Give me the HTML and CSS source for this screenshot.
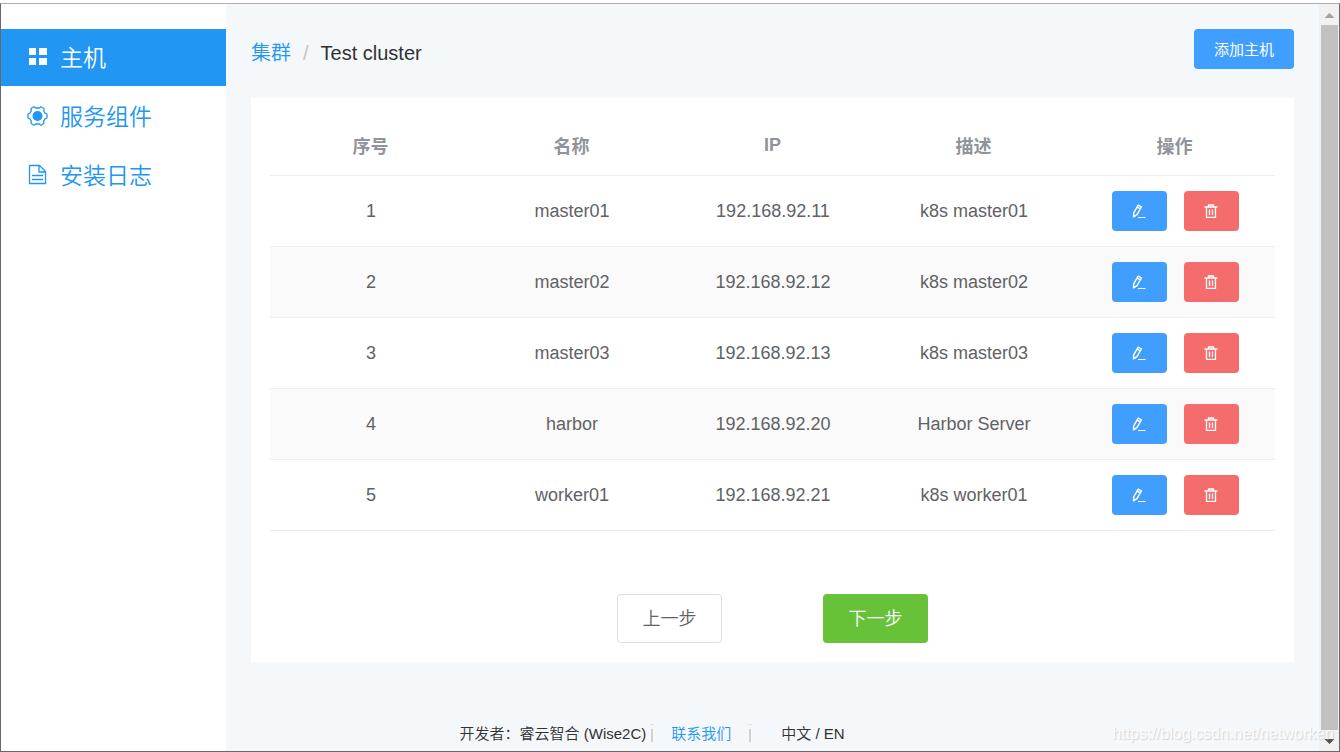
FILE: index.html
```html
<!DOCTYPE html>
<html lang="zh-CN">
<head>
<meta charset="utf-8">
<title>Test cluster</title>
<link rel="stylesheet" href="styles.css">
</head>
<body>
<svg class="sprite" aria-hidden="true">
  <symbol id="edit" viewBox="0 0 14 14">
    <path d="M6.2 1.2 9.4 2.9 5 10.600 1.500 12.800 1.700 8.800zM5.200 3.200 8.300 4.900" fill="none" stroke="currentColor" stroke-width="1.4" stroke-linejoin="round"/>
    <path d="M1.600 10 3.800 12 1.500 13z" fill="currentColor"/>
    <path d="M6 13.500h7.500" stroke="currentColor" stroke-width="1"/>
  </symbol>
  <symbol id="trash" viewBox="0 0 14 14">
    <path d="M.5 3h13M4.500 3V1h5v2M2.500 3v10.400h9V3M5.500 5.500v5.500M8.500 5.500v5.500" fill="none" stroke="currentColor" stroke-width="1.300"/>
  </symbol>
</svg>
<div class="window">
  <nav class="sidebar">
    <a class="nav-item active" href="#"><svg class="nav-icon" viewBox="0 0 22 22"><path d="M3 2h7v7H3zM13 2h8v7h-8zM3 12h7v7H3zM13 12h8v7h-8z" fill="currentColor"/></svg><span>主机</span></a>
    <a class="nav-item" href="#"><svg class="nav-icon" viewBox="0 0 22 22"><path d="M8 1.7 9.6 3h3.8L15 1.7 18 3.5 17.7 5.8 19 8.2 21 9v4l-2 .8-1.3 2.3.3 2.2-3 1.9L13.4 19H9.6L8 20.2 5 18.3l.3-2.2L4 13.8 2 13V9l2-.8 1.3-2.4L5 3.500z" fill="none" stroke="currentColor" stroke-width="1.3" stroke-linejoin="round"/><circle cx="11.5" cy="11" r="5" fill="currentColor"/></svg><span>服务组件</span></a>
    <a class="nav-item" href="#"><svg class="nav-icon" viewBox="0 0 22 22"><path d="M3.500 1.500h10l6 6v12h-16zM13 2v6h6M6 11.500h11M6 15.500h11" fill="none" stroke="currentColor" stroke-width="1.300"/></svg><span>安装日志</span></a>
  </nav>
  <main class="content">
    <header class="page-head">
      <div class="crumbs"><a href="#">集群</a><span class="slash">/</span><span>Test cluster</span></div>
      <button class="btn add" type="button">添加主机</button>
    </header>
    <section class="card">
      <table class="hosts">
        <thead><tr><th>序号</th><th>名称</th><th>IP</th><th>描述</th><th>操作</th></tr></thead>
        <tbody>
          <tr><td>1</td><td>master01</td><td>192.168.92.11</td><td>k8s master01</td><td><div class="actions"><button class="btn icon-btn edit" type="button" aria-label="编辑"><svg><use href="#edit"/></svg></button><button class="btn icon-btn delete" type="button" aria-label="删除"><svg><use href="#trash"/></svg></button></div></td></tr>
          <tr><td>2</td><td>master02</td><td>192.168.92.12</td><td>k8s master02</td><td><div class="actions"><button class="btn icon-btn edit" type="button" aria-label="编辑"><svg><use href="#edit"/></svg></button><button class="btn icon-btn delete" type="button" aria-label="删除"><svg><use href="#trash"/></svg></button></div></td></tr>
          <tr><td>3</td><td>master03</td><td>192.168.92.13</td><td>k8s master03</td><td><div class="actions"><button class="btn icon-btn edit" type="button" aria-label="编辑"><svg><use href="#edit"/></svg></button><button class="btn icon-btn delete" type="button" aria-label="删除"><svg><use href="#trash"/></svg></button></div></td></tr>
          <tr><td>4</td><td>harbor</td><td>192.168.92.20</td><td>Harbor Server</td><td><div class="actions"><button class="btn icon-btn edit" type="button" aria-label="编辑"><svg><use href="#edit"/></svg></button><button class="btn icon-btn delete" type="button" aria-label="删除"><svg><use href="#trash"/></svg></button></div></td></tr>
          <tr><td>5</td><td>worker01</td><td>192.168.92.21</td><td>k8s worker01</td><td><div class="actions"><button class="btn icon-btn edit" type="button" aria-label="编辑"><svg><use href="#edit"/></svg></button><button class="btn icon-btn delete" type="button" aria-label="删除"><svg><use href="#trash"/></svg></button></div></td></tr>
        </tbody>
      </table>
      <div class="steps">
        <button class="btn step prev" type="button">上一步</button>
        <button class="btn step next" type="button">下一步</button>
      </div>
    </section>
    <footer class="footer">
      <span>开发者：睿云智合 (Wise2C)</span><i class="divider"></i><a href="#">联系我们</a><i class="divider"></i><span class="lang">中文 / EN</span>
    </footer>
  </main>
  <div class="scrollbar" aria-hidden="true">
    <svg viewBox="0 0 20 21"><path d="M5.5 14 10.500 9l5 5z" fill="#a3a3a3"/></svg>
    <div class="thumb"></div>
    <svg viewBox="0 0 20 21"><path d="M5.500 9 10.500 14l5-5z" fill="#505050"/></svg>
  </div>
</div>
<div class="watermark">https://blog.csdn.net/networken</div>
</body>
</html>
```
FILE: styles.css
```css
* { box-sizing: border-box; }
body {
  margin: 0;
  padding-top: 3px;
  min-height: 100vh;
  display: flex;
  background: #fff;
  color: #303133;
  font-family: "Liberation Sans", "Noto Sans CJK SC", sans-serif;
  font-weight: 350;
}
a { color: #2196f3; text-decoration: none; }
.sprite { position: absolute; width: 0; height: 0; }
.window {
  flex: 1;
  display: flex;
  border: 1px solid #68686a;
  border-top-color: #b0b0b4;
}
.sidebar {
  flex: 0 0 225px;
  display: flex;
  flex-direction: column;
  gap: 2px;
  padding-top: 25px;
}
.nav-item {
  display: flex;
  align-items: center;
  gap: 12px;
  height: 57px;
  padding: 0 0 1px 25px;
  font-size: 23px;
}
.nav-item span { padding-bottom: 3px; }
.nav-item.active { background: #2196f3; color: #fff; }
.nav-icon { width: 22px; height: 22px; }
.content {
  flex: 1;
  display: flex;
  flex-direction: column;
  padding: 25px 25px 0;
  background: #f4f8fb;
}
.page-head {
  display: flex;
  justify-content: space-between;
  align-items: flex-start;
  margin-bottom: 29px;
}
.crumbs { display: flex; gap: 12px; height: 40px; font-size: 20px; line-height: 48px; }
.slash { color: #c0c4cc; }
.btn {
  border: 0;
  border-radius: 4px;
  padding: 0;
  color: #fff;
  font-family: inherit;
  font-weight: inherit;
}
.add { width: 100px; height: 40px; padding-bottom: 2px; background: #409eff; font-size: 15px; font-weight: 400; }
.card { padding: 19px; background: #fff; }
.hosts {
  width: 100%;
  table-layout: fixed;
  border-collapse: separate;
  border-spacing: 0;
  font-size: 18px;
  color: #606266;
  text-align: center;
}
.hosts th { height: 59px; padding: 0 0 2px; color: #909399; font-weight: 700; border-bottom: 1px solid #ebeef5; }
.hosts td { height: 71px; padding: 0 0 0 1px; border-bottom: 1px solid #ebeef5; }
.hosts tbody tr:nth-child(even) { background: #fafafa; }
.actions { display: flex; justify-content: center; gap: 17px; }
.icon-btn { display: flex; align-items: center; justify-content: center; width: 55px; height: 40px; }
.icon-btn svg { width: 14px; height: 14px; }
.edit { background: #409eff; }
.delete { background: #f56c6c; }
.steps { display: flex; justify-content: center; gap: 101px; margin-top: 63px; }
.step { width: 105px; height: 49px; padding-bottom: 4px; font-size: 18px; }
.prev { background: #fff; border: 1px solid #dcdfe6; color: #606266; }
.next { background: #67c23a; }
.footer {
  display: flex;
  align-items: center;
  margin-top: 60px;
  padding-left: 20%;
  font-size: 15px;
  line-height: 24px;
}
.divider {
  width: 4px;
  height: 21px;
  margin: 0 17px 0 4px;
  background: linear-gradient(#dcdfe6, #dcdfe6) 0 0 / 4px 1px no-repeat, linear-gradient(#cfd0d8, #cfd0d8) 1px 5px / 2px 13px no-repeat;
}
.footer a + .divider { margin: 0 29px 0 17px; }
.scrollbar { flex: 0 0 20px; display: flex; flex-direction: column; background: #f1f1f1; }
.scrollbar svg { flex: none; width: 20px; height: 21px; }
.thumb { flex: 1; margin: 0 1px 0 2px; background: #c1c1c1; }
.watermark {
  position: absolute;
  right: 6px;
  bottom: 8px;
  font-size: 16px;
  line-height: 20px;
  color: #fff;
  opacity: .6;
  text-shadow: 1px 1px 1px #bbb;
}
```
